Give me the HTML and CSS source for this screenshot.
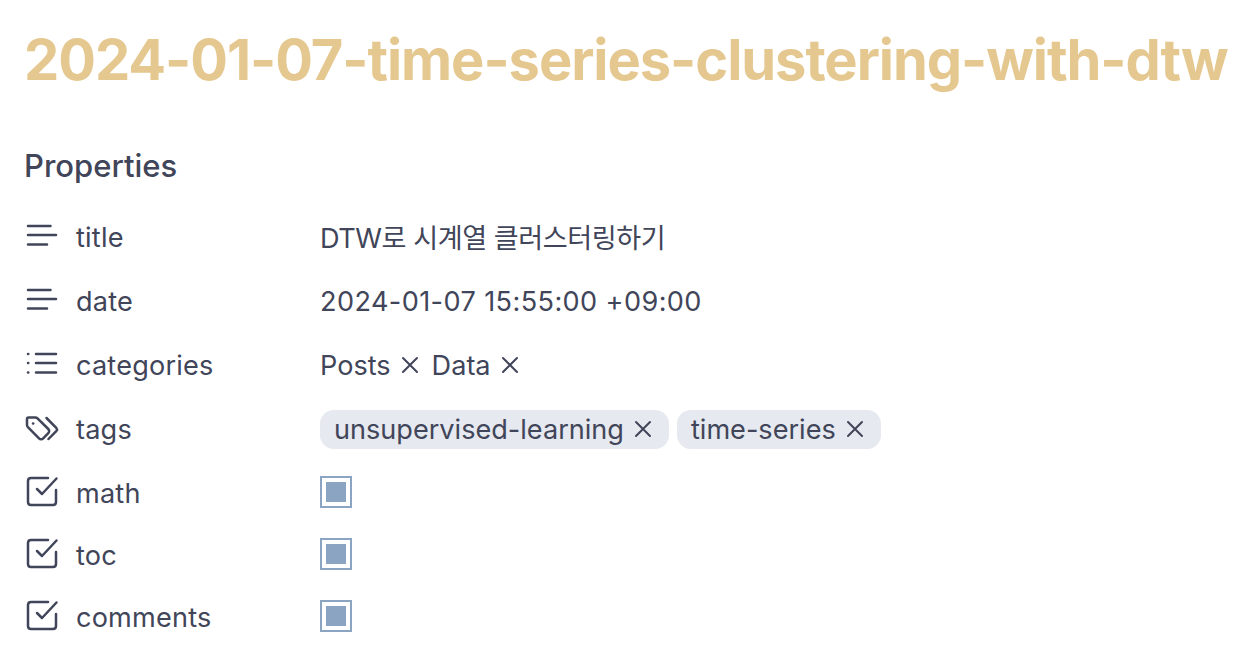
FILE: index.html
```html
<!DOCTYPE html>
<html lang="en">
<head>
    <meta charset="UTF-8">
    <meta name="viewport" content="width=device-width, initial-scale=1.0">
    <title>2024-01-07-time-series-clustering-with-dtw</title>
    <link rel="stylesheet" href="styles.css">
</head>
<body>
    <h1 class="note-title">2024-01-07-time-series-clustering-with-dtw</h1>
    <h2 class="props-heading">Properties</h2>

    <div class="props">
        <div class="row">
            <div class="key">
                <svg class="icon" viewBox="0 0 32 32"><path d="M3 5H25.500M3 14H31M3 23.500H22"/></svg>
                <span>title</span>
            </div>
            <div class="value korean">DTW로 시계열 클러스터링하기</div>
        </div>
        <div class="row">
            <div class="key">
                <svg class="icon" viewBox="0 0 32 32"><path d="M3 5H25.500M3 14H31M3 23.500H22"/></svg>
                <span>date</span>
            </div>
            <div class="value numbers">2024-01-07 15:55:00 +09:00</div>
        </div>
        <div class="row">
            <div class="key">
                <svg class="icon" viewBox="0 0 32 32"><path d="M11 5H31M11 14H31M11 23.500H31M3 5H3.300M3 14H3.300M3 23.500H3.300"/></svg>
                <span>categories</span>
            </div>
            <div class="value pills">
                <span class="plain">Posts <svg class="x" viewBox="0 0 18 18"><path d="M2 2L16 16M16 2L2 16"/></svg></span>
                <span class="plain">Data <svg class="x" viewBox="0 0 18 18"><path d="M2 2L16 16M16 2L2 16"/></svg></span>
            </div>
        </div>
        <div class="row">
            <div class="key">
                <svg class="icon" viewBox="0 0 32 32"><path d="M2 6V12C2 12.800 2.300 13.500 2.900 14.100L14 25.300C15.200 26.500 17 26.500 18.200 25.300L23.300 20.200C24.500 19 24.500 17.200 23.300 16L12.500 5.400C11.900 4.800 11.200 4.500 10.400 4.500H3.500C2.600 4.500 2 5.100 2 6Z"/><path d="M21.500 5L31.500 15.200C32.200 16 32.200 17 31.500 17.800L23.500 26"/><path d="M8 10.500H8.200"/></svg>
                <span>tags</span>
            </div>
            <div class="value pills">
                <span class="tag">unsupervised-learning <svg class="x" viewBox="0 0 18 18"><path d="M2 2L16 16M16 2L2 16"/></svg></span>
                <span class="tag">time-series <svg class="x" viewBox="0 0 18 18"><path d="M2 2L16 16M16 2L2 16"/></svg></span>
            </div>
        </div>
        <div class="row row-check">
            <div class="key">
                <svg class="icon" viewBox="0 0 32 32"><path d="M31 14V26C31 28 30 29 28 29H6C4 29 3 28 3 26V5C3 3 4 2 6 2H23"/><path d="M12 13L17 18L31.500 2.500"/></svg>
                <span>math</span>
            </div>
            <div class="value"><span class="checkbox"></span></div>
        </div>
        <div class="row row-check">
            <div class="key">
                <svg class="icon" viewBox="0 0 32 32"><path d="M31 14V26C31 28 30 29 28 29H6C4 29 3 28 3 26V5C3 3 4 2 6 2H23"/><path d="M12 13L17 18L31.500 2.500"/></svg>
                <span>toc</span>
            </div>
            <div class="value"><span class="checkbox"></span></div>
        </div>
        <div class="row row-check">
            <div class="key">
                <svg class="icon" viewBox="0 0 32 32"><path d="M31 14V26C31 28 30 29 28 29H6C4 29 3 28 3 26V5C3 3 4 2 6 2H23"/><path d="M12 13L17 18L31.500 2.500"/></svg>
                <span>comments</span>
            </div>
            <div class="value"><span class="checkbox"></span></div>
        </div>
    </div>
</body>
</html>
```
FILE: styles.css
```css
*{
    padding: 0px;
    margin: 0px;
    box-sizing: border-box;
}
body{
    background-color: #ffffff;
    color: #414559;
    font-family: "Inter", "Noto Sans CJK KR", sans-serif;
    font-size: 27.1px;
    padding: 0px 0px 0px 24px;
    overflow: hidden;
}
.note-title{
    color: #e5c890;
    font-size: 56px;
    font-weight: 700;
    letter-spacing: -1.05px;
    line-height: 66px;
    padding-top: 27px;
    white-space: nowrap;
}
.props-heading{
    font-size: 31px;
    font-weight: 500;
    line-height: 36px;
    margin-top: 55px;
}
.props{
    margin-top: 21px;
}
.row{
    display: flex;
    align-items: center;
    height: 64px;
}
.row-check{
    height: 62px;
}
.row-check .key span{
    padding-top: 2px;
}
.key{
    display: flex;
    align-items: center;
    gap: 19px;
    width: 296px;
    letter-spacing: 0.2px;
}
.icon{
    width: 32px;
    height: 32px;
    margin-left: 1px;
    fill: none;
    stroke: #414559;
    stroke-width: 2.5;
    stroke-linecap: round;
    stroke-linejoin: round;
    overflow: visible;
}
.value{
    display: flex;
    align-items: center;
}
.korean{
    letter-spacing: -0.45px;
    padding-bottom: 2px;
}
.numbers{
    letter-spacing: 0.4px;
}
.pills{
    gap: 8px;
}
.plain{
    display: flex;
    align-items: center;
    gap: 10px;
    padding-right: 5px;
}
.tag{
    display: flex;
    align-items: center;
    gap: 10px;
    height: 39px;
    padding: 0px 17px 0px 14px;
    background-color: #e6e9ef;
    border-radius: 14px;
}
.x{
    width: 18px;
    height: 18px;
    fill: none;
    stroke: #414559;
    stroke-width: 2;
    stroke-linecap: round;
}
.checkbox{
    display: block;
    width: 32px;
    height: 32px;
    border: 2px solid #8aa4c2;
    padding: 4px;
    background-color: #8aa4c2;
    background-clip: content-box;
}
```
